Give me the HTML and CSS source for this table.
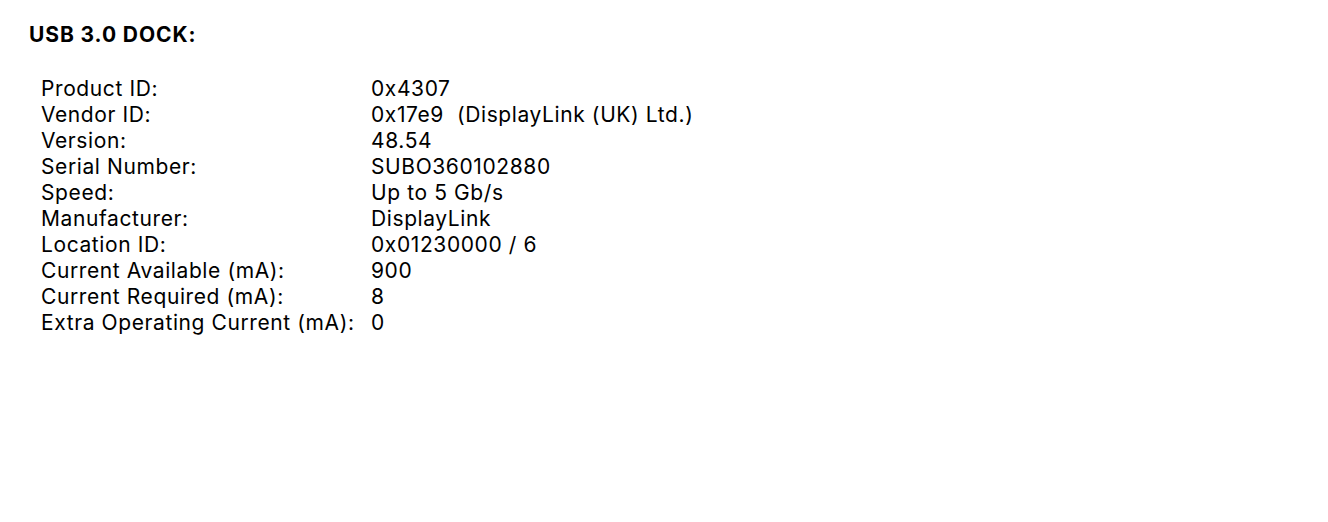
FILE: index.html
```html
<!DOCTYPE html>
<html lang="en">
<head>
    <meta charset="UTF-8">
    <title>USB 3.0 DOCK</title>
    <link rel="stylesheet" href="styles.css">
</head>
<body>
    <div class="device">
        <h1 class="device-title">USB 3.0 DOCK:</h1>
        <div class="props">
            <div class="prop-label">Product ID:</div><div class="prop-value">0x4307</div>
            <div class="prop-label">Vendor ID:</div><div class="prop-value">0x17e9&nbsp; (DisplayLink (UK) Ltd.)</div>
            <div class="prop-label">Version:</div><div class="prop-value">48.54</div>
            <div class="prop-label">Serial Number:</div><div class="prop-value">SUBO360102880</div>
            <div class="prop-label">Speed:</div><div class="prop-value">Up to 5 Gb/s</div>
            <div class="prop-label">Manufacturer:</div><div class="prop-value">DisplayLink</div>
            <div class="prop-label">Location ID:</div><div class="prop-value">0x01230000 / 6</div>
            <div class="prop-label">Current Available (mA):</div><div class="prop-value">900</div>
            <div class="prop-label">Current Required (mA):</div><div class="prop-value">8</div>
            <div class="prop-label">Extra Operating Current (mA):</div><div class="prop-value">0</div>
        </div>
    </div>
</body>
</html>
```
FILE: styles.css
```css
body {
    margin: 0;
    background-color: #ffffff;
    color: #000000;
    font-family: Inter, "Noto Sans", sans-serif;
}
.device {
    padding: 21px 0 0 29px;
}
.device-title {
    margin: 0;
    font-size: 21px;
    font-weight: 700;
    letter-spacing: 0.9px;
    line-height: 28px;
}
.props {
    display: grid;
    grid-template-columns: 330px auto;
    justify-content: start;
    margin: 27px 0 0 12px;
    font-size: 21px;
    letter-spacing: 0.6px;
    line-height: 26px;
}
```
